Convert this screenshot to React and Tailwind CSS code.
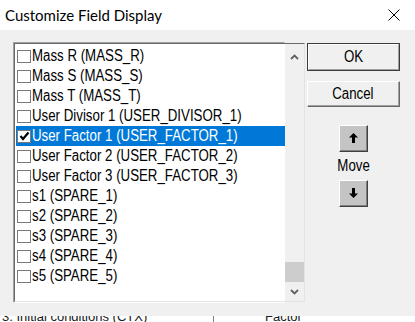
// App.jsx — "Customize Field Display" classic Win32 dialog

const rows = [
  { label: 'Mass R (MASS_R)' },
  { label: 'Mass S (MASS_S)' },
  { label: 'Mass T (MASS_T)' },
  { label: 'User Divisor 1 (USER_DIVISOR_1)' },
  { label: 'User Factor 1 (USER_FACTOR_1)', checked: true, selected: true },
  { label: 'User Factor 2 (USER_FACTOR_2)' },
  { label: 'User Factor 3 (USER_FACTOR_3)' },
  { label: 's1 (SPARE_1)' },
  { label: 's2 (SPARE_2)' },
  { label: 's3 (SPARE_3)' },
  { label: 's4 (SPARE_4)' },
  { label: 's5 (SPARE_5)' },
];

// old MS Sans Serif at 125% is tall and narrow — squeeze Arial metrics to match
const sysFont = { fontFamily: '"Liberation Sans", Arial, sans-serif' };

function CheckBox({ checked }) {
  return (
    <div className="w-[14px] h-[13px] flex-shrink-0 border border-[#7a7a7a] bg-white flex items-center justify-center">
      {checked && (
        <svg width="11" height="10" viewBox="0 0 11 10">
          <path d="M1.5 5 L4 8 L9.5 1.5" fill="none" stroke="#000" strokeWidth="2.2" />
        </svg>
      )}
    </div>
  );
}

function Chevron({ up }) {
  return (
    <svg width="9" height="6" viewBox="0 0 9 6">
      <path d={up ? 'M1 5 L4.5 1.5 L8 5' : 'M1 1 L4.5 4.5 L8 1'} fill="none" stroke="#606060" strokeWidth="1.8" />
    </svg>
  );
}

function MoveArrow({ up }) {
  return (
    <svg width="9" height="10" viewBox="0 0 9 10">
      {up
        ? <path d="M4.5 0 L9 4.5 L6 4.5 L6 10 L3 10 L3 4.5 L0 4.5 Z" fill="#000" />
        : <path d="M4.5 10 L9 5.5 L6 5.5 L6 0 L3 0 L3 5.5 L0 5.5 Z" fill="#000" />}
    </svg>
  );
}

export default function App() {
  return (
    <div className="w-[415px] h-[322px] overflow-hidden bg-white flex flex-col" style={sysFont}>

      {/* ── Title bar ── */}
      <div className="h-[30px] flex items-center justify-between bg-white pl-[5px] pr-[15px]">
        <span className="text-[15px] text-black" style={{ fontFamily: 'Lato, "Open Sans", sans-serif' }}>
          Customize Field Display
        </span>
        <svg width="12" height="12" viewBox="0 0 12 12">
          <path d="M0.5 0.5 L11.5 11.5 M11.5 0.5 L0.5 11.5" stroke="#000" strokeWidth="1" />
        </svg>
      </div>

      {/* ── Dialog body ── */}
      <div className="h-[286px] bg-[#f0f0f0] flex pt-[12px] pl-[13px]">

        {/* Listbox */}
        <div className="w-[272px] h-[261px] flex border-t border-l border-t-[#a0a0a0] border-l-[#a0a0a0] border-b border-r border-b-white border-r-white">
          <div className="flex-1 flex border-t border-l border-t-[#696969] border-l-[#696969] border-b border-r border-b-[#e3e3e3] border-r-[#e3e3e3] bg-white">
            <div className="flex-1 flex flex-col pt-[2px] pl-px">
              {rows.map(({ label, checked, selected }) => (
                <div
                  key={label}
                  className={`h-[20px] flex items-center gap-px pl-px ${selected ? 'bg-[#0078d7] text-white' : 'text-black'}`}
                >
                  <CheckBox checked={checked} />
                  <span className="text-[16px] leading-none whitespace-nowrap origin-left scale-x-[0.83]">{label}</span>
                </div>
              ))}
            </div>

            {/* Scrollbar */}
            <div className="w-[19px] bg-[#f0f0f0] flex flex-col items-center">
              <div className="h-[25px] flex items-center justify-center"><Chevron up /></div>
              <div className="flex-1 flex flex-col justify-end w-full">
                <div className="h-[20px] w-full bg-[#cdcdcd]" />
              </div>
              <div className="h-[19px] flex items-center justify-center"><Chevron /></div>
            </div>
          </div>
        </div>

        {/* Right column */}
        <div className="ml-[22px] w-[93px] flex flex-col items-center pt-px">
          <button className="w-[93px] h-[28px] border border-[#3c3c3c] flex">
            <span className="flex-1 flex items-center justify-center border-t border-l border-t-white border-l-white border-b border-r border-b-[#a0a0a0] border-r-[#a0a0a0] bg-[#f0f0f0] text-[16px] text-black">
              <span className="scale-x-[0.83]">OK</span>
            </span>
          </button>
          <button className="mt-[10px] w-[93px] h-[26px] flex border-t border-l border-t-white border-l-white border-b border-r border-b-[#696969] border-r-[#696969]">
            <span className="flex-1 flex items-center justify-center border-b border-r border-b-[#a0a0a0] border-r-[#a0a0a0] bg-[#f0f0f0] text-[16px] text-black">
              <span className="scale-x-[0.83]">Cancel</span>
            </span>
          </button>

          <div className="mt-[18px] flex flex-col items-center">
            <button className="w-[29px] h-[27px] flex border-t border-l border-t-white border-l-white border-b border-r border-b-[#404040] border-r-[#404040]">
              <span className="flex-1 flex items-center justify-center border-b border-r border-b-[#808080] border-r-[#808080] bg-[#c4c4c4]">
                <MoveArrow up />
              </span>
            </button>
            <span className="h-[28px] flex items-center text-[16px] text-black scale-x-[0.83]">Move</span>
            <button className="w-[29px] h-[27px] flex border-t border-l border-t-white border-l-white border-b border-r border-b-[#404040] border-r-[#404040]">
              <span className="flex-1 flex items-center justify-center border-b border-r border-b-[#808080] border-r-[#808080] bg-[#c4c4c4]">
                <MoveArrow />
              </span>
            </button>
          </div>
        </div>
      </div>

      {/* Underlying window peeking through below the dialog */}
      <div className="flex-1 bg-white relative overflow-hidden">
        <span className="absolute left-[2px] top-[-9px] text-[13px] text-[#202020] whitespace-nowrap">3. Initial conditions (CTX)</span>
        <div className="absolute left-[213px] top-0 w-px h-full bg-[#808080]" />
        <span className="absolute left-[265px] top-[-9px] text-[13px] text-[#202020] whitespace-nowrap">Factor</span>
      </div>
    </div>
  );
}
